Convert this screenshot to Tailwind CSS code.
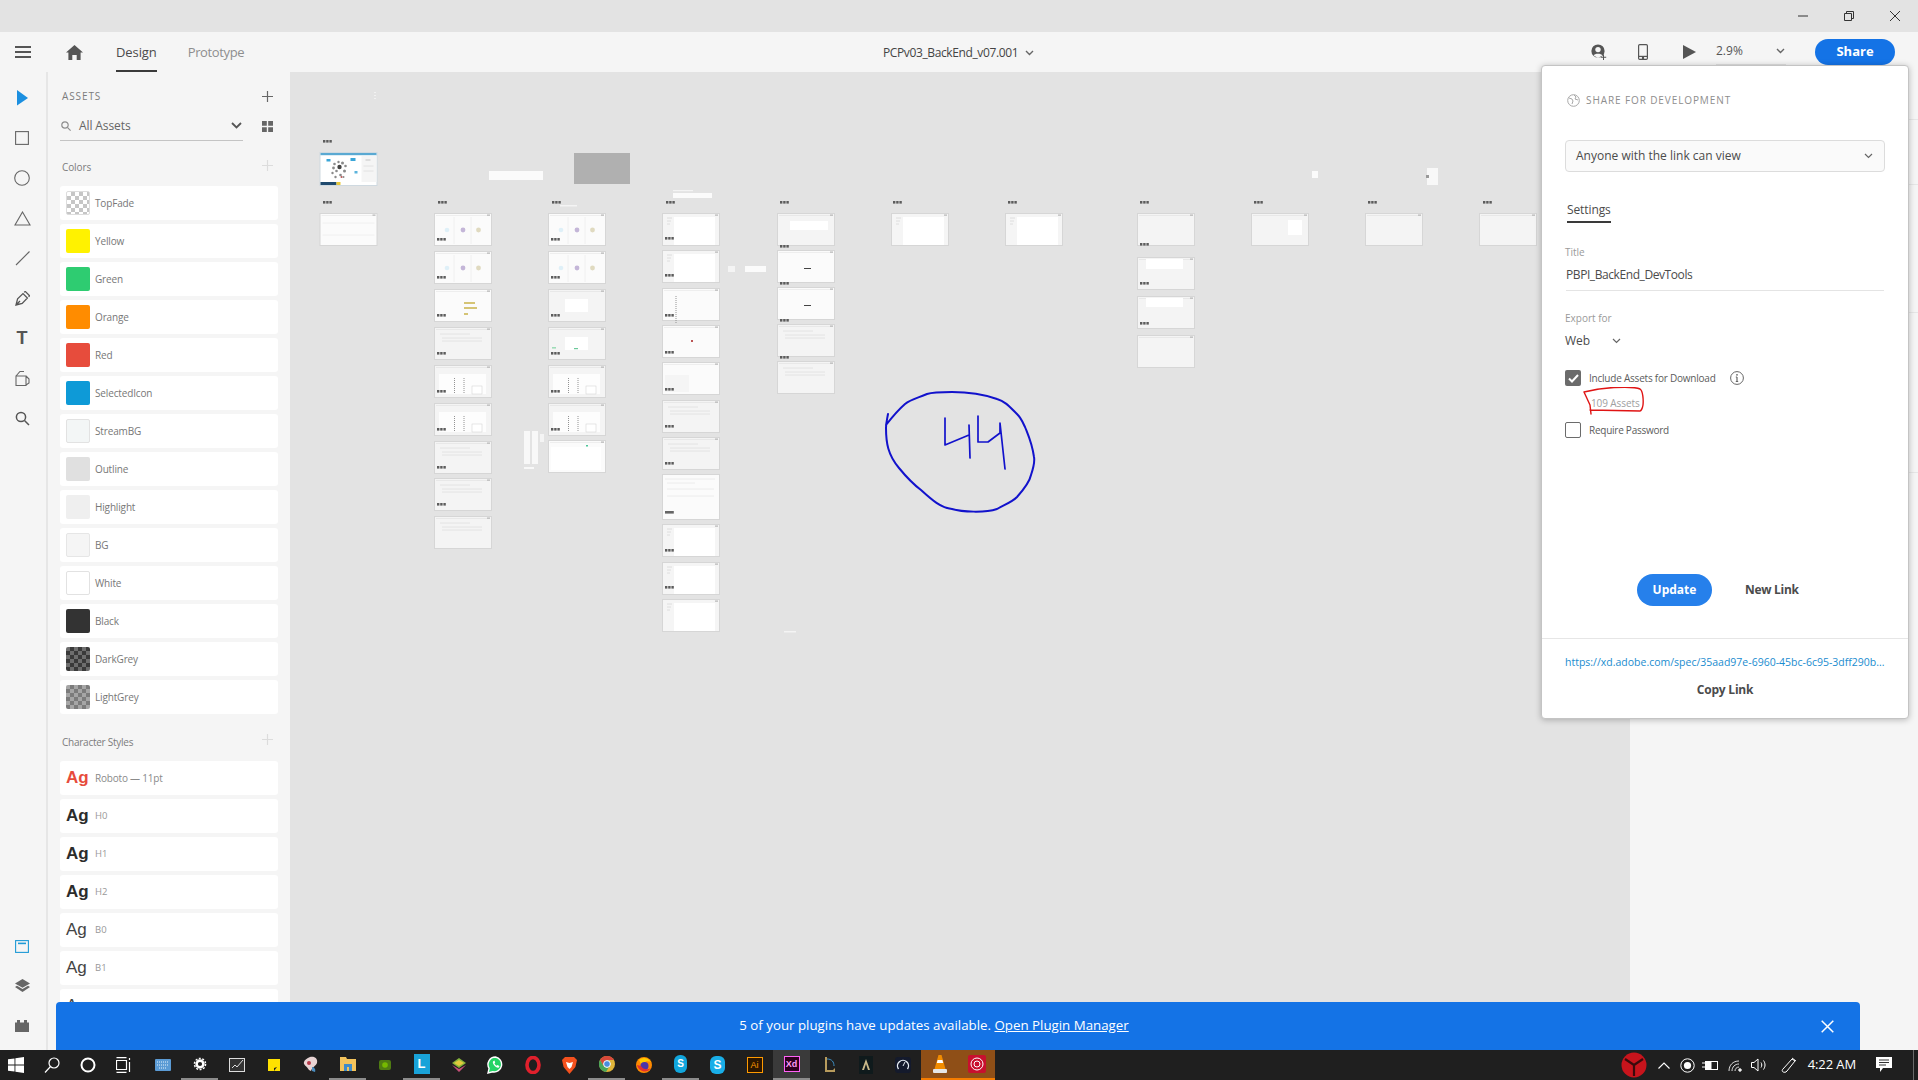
<!DOCTYPE html>
<html lang="en">
<head>
<meta charset="UTF-8" />
<title>PCPv03_BackEnd_v07.001 - Adobe XD</title>
<script src="https://cdn.jsdelivr.net/npm/@tailwindcss/browser@4"></script>
</head>
<body class="bg-[#e3e3e3]">
<div class="relative w-[1918px] h-[1080px] overflow-hidden flex flex-col font-['Open_Sans',sans-serif] text-[#4b4b4b]">

  <!-- title bar -->
  <div class="h-8 shrink-0 bg-[#e3e3e3] flex justify-end items-center text-[#333]">
    <div class="w-[46px] h-8 flex items-center justify-center"><svg width="12" height="12" viewBox="0 0 12 12"><path d="M1 6h10" stroke="#333" /></svg></div>
    <div class="w-[46px] h-8 flex items-center justify-center"><svg width="12" height="12" viewBox="0 0 12 12" fill="none" stroke="#333"><path d="M1.5 3.5h7v7h-7zM3.5 3.5v-2h7v7h-2" /></svg></div>
    <div class="w-[46px] h-8 flex items-center justify-center mr-0"><svg width="12" height="12" viewBox="0 0 12 12" fill="none" stroke="#333"><path d="M1 1l10 10M11 1L1 11" /></svg></div>
  </div>

  <!-- toolbar -->
  <div class="h-10 shrink-0 bg-[#f5f5f5] flex items-center relative">
    <svg class="ml-[15px]" width="16" height="12" viewBox="0 0 16 12" fill="#555"><path d="M0 0h16v2H0zM0 5h16v2H0zM0 10h16v2H0z" /></svg>
    <svg class="ml-[35px]" width="17" height="15" viewBox="0 0 17 15" fill="#555"><path d="M8.5 0L17 7.5h-2.4V15h-3.9v-5H6.3v5H2.4V7.5H0z" /></svg>
    <div class="ml-[33px] h-10 flex items-center border-b-2 border-[#3a3a3a] text-[13px] tracking-[-0.1px] text-[#4b4b4b] pt-[3px]">Design</div>
    <div class="ml-[31px] text-[13px] tracking-[-0.35px] pt-[1px] text-[#8e8e8e]">Prototype</div>
    <div class="absolute left-[883px] top-0 h-10 pt-[1px] flex items-center text-[12px] tracking-[-0.38px] text-[#444] gap-[7px]">
      PCPv03_BackEnd_v07.001
      <svg width="9" height="6" viewBox="0 0 9 6" fill="none" stroke="#666" stroke-width="1.4"><path d="M1 1l3.5 3.5L8 1" /></svg>
    </div>
    <div class="ml-auto flex items-center">
      <svg class="mr-[31px]" width="16" height="16" viewBox="0 0 16 16" fill="#555"><circle cx="7" cy="7" r="6.6" /><circle cx="7" cy="5.6" r="2.7" fill="#f5f5f5" /><path d="M2.6 11.4c.8-2.2 7.9-2.2 8.8 0L7 14z" fill="#f5f5f5" /><path d="M12 10.5h1v2.2h2.2v1H13V16h-1v-2.3H9.8v-1H12z" /></svg>
      <svg class="mr-[35px]" width="10" height="16" viewBox="0 0 10 16" fill="none" stroke="#555" stroke-width="1.2"><rect x=".6" y=".6" width="8.8" height="14.8" rx="1.2" /><path d="M.6 12.4h8.8" /><circle cx="5" cy="14" r=".6" fill="#555" /></svg>
      <svg class="mr-[20px]" width="13" height="14" viewBox="0 0 13 14" fill="#555"><path d="M0 0l13 7-13 7z" /></svg>
      <div class="w-[70px] h-[26px] mr-[29px] border-b border-[#e0e0e0] flex items-center justify-between pr-[1px] pb-[2px] text-[12px] text-[#555]">
        2.9%
        <svg width="9" height="6" viewBox="0 0 9 6" fill="none" stroke="#666" stroke-width="1.4"><path d="M1 1l3.5 3.5L8 1" /></svg>
      </div>
      <div class="w-[80px] h-[26px] rounded-full bg-[#1473e6] text-white text-[13px] font-bold flex items-center justify-center mr-[23px]">Share</div>
    </div>
  </div>

  <!-- main -->
  <div class="flex-1 flex min-h-0">
    <!-- tool rail -->
    <div class="w-[46px] shrink-0 bg-[#f5f5f5] flex flex-col items-center pt-[6px] pb-[4px] pr-[2px]">
      <div class="flex flex-col items-center">
        <div class="h-10 flex items-center"><svg width="14" height="18" viewBox="0 0 14 18" fill="#1b8fe0"><path d="M2 1l11 8-11 7.5z" /></svg></div>
        <div class="h-10 flex items-center"><svg width="14" height="14" viewBox="0 0 14 14" fill="none" stroke="#666" stroke-width="1.1"><rect x=".6" y=".6" width="12.8" height="12.8" /></svg></div>
        <div class="h-10 flex items-center"><svg width="16" height="16" viewBox="0 0 16 16" fill="none" stroke="#666" stroke-width="1.1"><circle cx="8" cy="8" r="7.3" /></svg></div>
        <div class="h-10 flex items-center"><svg width="17" height="15" viewBox="0 0 17 15" fill="none" stroke="#666" stroke-width="1.1"><path d="M8.5 1L16 14H1z" /></svg></div>
        <div class="h-10 flex items-center"><svg width="15" height="15" viewBox="0 0 15 15" fill="none" stroke="#666" stroke-width="1.1"><path d="M1 14L14.5 .5" /></svg></div>
        <div class="h-10 flex items-center"><svg width="15" height="15" viewBox="0 0 15 15" fill="none" stroke="#555" stroke-width="1.3"><path d="M1 14l1.6-6.2L8 2.6l4.4 4.4-5.2 5.4zM9.2 1.4l1-1 4.4 4.4-1 1M1 14l4-4" /></svg></div>
        <div class="h-10 flex items-center font-['Liberation_Sans',sans-serif] font-bold text-[18px] text-[#555]">T</div>
        <div class="h-10 flex items-center"><svg width="15" height="15" viewBox="0 0 15 15" fill="none" stroke="#666" stroke-width="1.1"><path d="M1 5h10v9.500H1zM1 5l4-4.500h4M11 5l3 3v4l-3 2" /></svg></div>
        <div class="h-10 flex items-center"><svg width="15" height="15" viewBox="0 0 15 15" fill="none" stroke="#555" stroke-width="1.5"><circle cx="6" cy="6" r="4.6" /><path d="M9.5 9.5L14 14" /></svg></div>
      </div>
      <div class="mt-auto flex flex-col items-center">
        <div class="h-10 flex items-center"><svg width="14" height="13" viewBox="0 0 14 13" fill="none" stroke="#1f9ad6" stroke-width="1.1"><rect x=".6" y=".6" width="12.8" height="11.8" /><path d="M3 3.4h8" stroke-width="1.6" /></svg></div>
        <div class="h-10 flex items-center"><svg width="15" height="14" viewBox="0 0 15 14" fill="#666"><path d="M7.5 0L15 4.4 7.5 8.8 0 4.4z" /><path d="M2 6.8l5.5 3.2L13 6.8l2 1.3-7.5 5-7.5-5z" /></svg></div>
        <div class="h-10 flex items-center"><svg width="14" height="12" viewBox="0 0 14 12" fill="#666"><path d="M0 2.5h2V0h3v2.5h4V0h3v2.5h2V12H0z" /></svg></div>
      </div>
    </div>
    <div class="w-[2px] shrink-0 bg-[#e6e6e6]"></div>

    <!-- assets panel -->
    <div class="w-[242px] shrink-0 bg-[#f5f5f5] pl-[12px] pr-[12px] overflow-hidden">
      <div class="h-[16px] mt-[16px] flex items-center justify-between pl-[2px] pr-[5px]">
        <span class="text-[10px] tracking-[0.9px] text-[#7c7c7c]">ASSETS</span>
        <svg width="11" height="11" viewBox="0 0 11 11" stroke="#666" stroke-width="1.2"><path d="M5.5 0v11M0 5.5h11" /></svg>
      </div>
      <div class="flex items-center mt-[9px]">
        <div class="w-[183px] h-[28px] border-b border-[#c4c4c4] flex items-center pl-[1px] pr-[1px] pb-[2px]">
          <svg width="10" height="10" viewBox="0 0 10 10" fill="none" stroke="#8e8e8e" stroke-width="1.2"><circle cx="4" cy="4" r="3.2" /><path d="M6.4 6.4L9.6 9.6" /></svg>
          <span class="ml-[8px] text-[12px] tracking-[-0.1px] text-[#666]">All Assets</span>
          <svg class="ml-auto" width="11" height="7" viewBox="0 0 11 7" fill="none" stroke="#555" stroke-width="1.8"><path d="M1 1l4.5 4.5L10 1" /></svg>
        </div>
        <svg class="ml-[19px] mb-[2px]" width="11" height="11" viewBox="0 0 11 11" fill="#666"><path d="M0 0h4.8v4.8H0zM6.2 0H11v4.8H6.2zM0 6.2h4.8V11H0zM6.2 6.2H11V11H6.2z" /></svg>
      </div>
      <div class="h-[16px] mt-[18px] flex items-center justify-between pl-[2px] pr-[5px]">
        <span class="text-[10px] tracking-[-0.1px] text-[#7c7c7c] mt-[1px]">Colors</span>
        <svg class="mb-[4px]" width="11" height="11" viewBox="0 0 11 11" stroke="#dcdcdc" stroke-width="1.2"><path d="M5.5 0v11M0 5.5h11" /></svg>
      </div>
      <div class="flex flex-col gap-1 mt-[11px]">
        <div class="h-[34px] rounded-[3px] bg-white flex items-center pl-[6px]"><div class="w-6 h-6 rounded-[2px] border border-[#ddd] bg-[image:repeating-conic-gradient(#c6c6c6_0_25%,#fff_0_50%)] bg-[length:8px_8px]"></div><span class="ml-[5px] text-[10px] tracking-[-0.15px] text-[#777]">TopFade</span></div>
        <div class="h-[34px] rounded-[3px] bg-white flex items-center pl-[6px]"><div class="w-6 h-6 rounded-[2px] bg-[#fff200]"></div><span class="ml-[5px] text-[10px] tracking-[-0.15px] text-[#777]">Yellow</span></div>
        <div class="h-[34px] rounded-[3px] bg-white flex items-center pl-[6px]"><div class="w-6 h-6 rounded-[2px] bg-[#2ecc71]"></div><span class="ml-[5px] text-[10px] tracking-[-0.15px] text-[#777]">Green</span></div>
        <div class="h-[34px] rounded-[3px] bg-white flex items-center pl-[6px]"><div class="w-6 h-6 rounded-[2px] bg-[#ff8c00]"></div><span class="ml-[5px] text-[10px] tracking-[-0.15px] text-[#777]">Orange</span></div>
        <div class="h-[34px] rounded-[3px] bg-white flex items-center pl-[6px]"><div class="w-6 h-6 rounded-[2px] bg-[#e74c3c]"></div><span class="ml-[5px] text-[10px] tracking-[-0.15px] text-[#777]">Red</span></div>
        <div class="h-[34px] rounded-[3px] bg-white flex items-center pl-[6px]"><div class="w-6 h-6 rounded-[2px] bg-[#0e9ad7]"></div><span class="ml-[5px] text-[10px] tracking-[-0.15px] text-[#777]">SelectedIcon</span></div>
        <div class="h-[34px] rounded-[3px] bg-white flex items-center pl-[6px]"><div class="w-6 h-6 rounded-[2px] border border-[#e2e2e2] bg-[#f3f6f6]"></div><span class="ml-[5px] text-[10px] tracking-[-0.15px] text-[#777]">StreamBG</span></div>
        <div class="h-[34px] rounded-[3px] bg-white flex items-center pl-[6px]"><div class="w-6 h-6 rounded-[2px] bg-[#e0e0e0]"></div><span class="ml-[5px] text-[10px] tracking-[-0.15px] text-[#777]">Outline</span></div>
        <div class="h-[34px] rounded-[3px] bg-white flex items-center pl-[6px]"><div class="w-6 h-6 rounded-[2px] bg-[#efefef]"></div><span class="ml-[5px] text-[10px] tracking-[-0.15px] text-[#777]">Highlight</span></div>
        <div class="h-[34px] rounded-[3px] bg-white flex items-center pl-[6px]"><div class="w-6 h-6 rounded-[2px] border border-[#e6e6e6] bg-[#f5f5f5]"></div><span class="ml-[5px] text-[10px] tracking-[-0.15px] text-[#777]">BG</span></div>
        <div class="h-[34px] rounded-[3px] bg-white flex items-center pl-[6px]"><div class="w-6 h-6 rounded-[2px] border border-[#e2e2e2] bg-white"></div><span class="ml-[5px] text-[10px] tracking-[-0.15px] text-[#777]">White</span></div>
        <div class="h-[34px] rounded-[3px] bg-white flex items-center pl-[6px]"><div class="w-6 h-6 rounded-[2px] bg-[#333]"></div><span class="ml-[5px] text-[10px] tracking-[-0.15px] text-[#777]">Black</span></div>
        <div class="h-[34px] rounded-[3px] bg-white flex items-center pl-[6px]"><div class="w-6 h-6 rounded-[2px] bg-[image:repeating-conic-gradient(#3a3a3a_0_25%,#6e6e6e_0_50%)] bg-[length:8px_8px]"></div><span class="ml-[5px] text-[10px] tracking-[-0.15px] text-[#777]">DarkGrey</span></div>
        <div class="h-[34px] rounded-[3px] bg-white flex items-center pl-[6px]"><div class="w-6 h-6 rounded-[2px] bg-[image:repeating-conic-gradient(#7c7c7c_0_25%,#a6a6a6_0_50%)] bg-[length:8px_8px]"></div><span class="ml-[5px] text-[10px] tracking-[-0.15px] text-[#777]">LightGrey</span></div>
      </div>
      <div class="h-[16px] mt-[19px] flex items-center justify-between pl-[2px] pr-[5px]">
        <span class="text-[10px] tracking-[-0.25px] text-[#7c7c7c] mt-[2px]">Character Styles</span>
        <svg class="mb-[4px]" width="11" height="11" viewBox="0 0 11 11" stroke="#dcdcdc" stroke-width="1.2"><path d="M5.5 0v11M0 5.5h11" /></svg>
      </div>
      <div class="flex flex-col gap-1 mt-[12px] font-['Liberation_Sans',sans-serif]">
        <div class="h-[34px] rounded-[3px] bg-white flex items-center pl-[6px]"><span class="w-[22px] text-[17px] font-bold text-[#e74c3c]">Ag</span><span class="ml-[7px] text-[10px] tracking-[-0.2px] text-[#8a8a8a] font-['Open_Sans',sans-serif]">Roboto — 11pt</span></div>
        <div class="h-[34px] rounded-[3px] bg-white flex items-center pl-[6px]"><span class="w-[22px] text-[17px] font-bold text-[#2c2c2c]">Ag</span><span class="ml-[7px] text-[9.5px] text-[#999] font-['Open_Sans',sans-serif]">H0</span></div>
        <div class="h-[34px] rounded-[3px] bg-white flex items-center pl-[6px]"><span class="w-[22px] text-[17px] font-bold text-[#2c2c2c]">Ag</span><span class="ml-[7px] text-[9.5px] text-[#999] font-['Open_Sans',sans-serif]">H1</span></div>
        <div class="h-[34px] rounded-[3px] bg-white flex items-center pl-[6px]"><span class="w-[22px] text-[17px] font-bold text-[#2c2c2c]">Ag</span><span class="ml-[7px] text-[9.5px] text-[#999] font-['Open_Sans',sans-serif]">H2</span></div>
        <div class="h-[34px] rounded-[3px] bg-white flex items-center pl-[6px]"><span class="w-[22px] text-[17px] text-[#444]">Ag</span><span class="ml-[7px] text-[9.5px] text-[#999] font-['Open_Sans',sans-serif]">B0</span></div>
        <div class="h-[34px] rounded-[3px] bg-white flex items-center pl-[6px]"><span class="w-[22px] text-[17px] text-[#444]">Ag</span><span class="ml-[7px] text-[9.5px] text-[#999] font-['Open_Sans',sans-serif]">B1</span></div>
        <div class="h-[34px] rounded-[3px] bg-white flex items-center pl-[6px]"><span class="w-[22px] text-[17px] text-[#444]">Ag</span></div>
      </div>
    </div>

    <!-- canvas -->
    <div class="w-[1340px] shrink-0 bg-[#e3e3e3] relative">
      <svg class="absolute left-0 top-0 blur-[0.4px]" width="1340" height="978" viewBox="290 72 1340 978">
        <defs>
          <g id="dots" fill="#5c5c5c"><rect width="2.4" height="2.6" /><rect x="3.2" width="2.4" height="2.6" /><rect x="6.4" width="2.4" height="2.6" /></g>
          <g id="frame"><rect x=".5" y=".5" width="57" height="32" fill="#fbfbfb" stroke="#d6d6d6" /><path d="M2 2.5h54" stroke="#eeeeee" /><rect x="53" y="1.5" width="3" height="1.2" fill="#b5b5b5" /></g>
          <g id="flat"><rect x=".5" y=".5" width="57" height="32" fill="#f4f4f4" stroke="#d6d6d6" /><path d="M2 2.5h54" stroke="#e8e8e8" /><rect x="53" y="1.5" width="3" height="1.2" fill="#b5b5b5" /></g>
          <g id="side"><rect x=".5" y=".5" width="57" height="32" fill="#f5f5f5" stroke="#d6d6d6" /><rect x="12" y="4" width="41" height="28" fill="#fff" /><rect x="53" y="1.5" width="3" height="1.2" fill="#b5b5b5" /><path d="M5 5h5M5 8h4M5 11h3" stroke="#d8d8d8" stroke-width=".8" /></g>
          <g id="blobs"><use href="#frame" /><path d="M20 4v27M37 4v27" stroke="#f0f0f0" /><circle cx="13" cy="17" r="2.3" fill="#dff0f8" /><circle cx="29" cy="17" r="2.4" fill="#c4b6d8" /><circle cx="44.500" cy="17" r="2.400" fill="#e0dac0" /></g>
          <g id="table"><use href="#flat" /><rect x="5" y="9" width="47" height="20" fill="#fdfdfd" /><path d="M20.5 13v15M30 13v15" stroke="#777" stroke-width=".8" stroke-dasharray="1 1" /><rect x="38" y="21" width="10" height="8" fill="#fff" stroke="#d6d6d6" stroke-width=".6" /></g>
          <g id="form"><use href="#flat" /><path d="M6 7h30M8 11h40M8 14h40" stroke="#e0e0e0" stroke-width=".8" /></g>
        </defs>

        <!-- hero board -->
        <use href="#dots" x="323" y="140" />
        <g transform="translate(319.5 152)">
          <rect x=".5" y=".5" width="57" height="33" fill="#fff" stroke="#cfd9e0" />
          <rect x="1" y="1" width="56" height="2.2" fill="#5aa9d2" />
          <rect x="1" y="30" width="16" height="3" fill="#1f4a6e" />
          <rect x="17" y="30" width="4" height="3" fill="#e8c93a" />
          <rect x="42" y="4" width="15" height="26" fill="#f5f5f5" />
          <rect x="7" y="7" width="4" height="2.500" fill="#3aa6d8" /><rect x="31" y="6" width="5" height="3" fill="#3aa6d8" /><rect x="35" y="19" width="3" height="2.500" fill="#5bb3dc" />
          <g fill="#8a8a8a"><circle cx="15" cy="12" r="1.300" /><circle cx="19" cy="10" r="1.200" /><circle cx="23" cy="11" r="1.500" /><circle cx="26" cy="14" r="1.300" /><circle cx="14" cy="16" r="1.400" /><circle cx="17" cy="19" r="1.300" /><circle cx="25" cy="19" r="1.500" /><circle cx="13" cy="21" r="1.200" /><circle cx="21" cy="23" r="1.300" /><circle cx="24" cy="25" r="1" /><circle cx="16" cy="25" r="1.200" /></g>
          <circle cx="20" cy="15" r="2.200" fill="#444" /><circle cx="22" cy="25" r="1" fill="#b55" />
          <path d="M44 14h10M44 19h10" stroke="#e2e2e2" />
          <rect x="46" y="7" width="5" height="2" fill="#ddd" />
        </g>
        <rect x="489" y="171" width="54" height="9" fill="#fbfbfb" />
        <rect x="574" y="153" width="56" height="31" fill="#b0b0b0" />
        <rect x="673" y="193" width="39" height="5" fill="#fbfbfb" />
        <rect x="673" y="190" width="20" height="1.2" fill="#f4f4f4" />
        <rect x="560" y="205" width="17" height="1.5" fill="#f4f4f4" />
        <rect x="728" y="266" width="7" height="6" fill="#f4f4f4" /><rect x="745" y="266" width="21" height="6" fill="#fbfbfb" />
        <path d="M375 92v1M375 95v1M375 98v1" stroke="#f7f7f7" stroke-width="1.5" />
        <rect x="1312" y="171" width="6" height="7" fill="#fbfbfb" />
        <rect x="1427" y="168" width="11" height="17" fill="#f8f8f8" /><rect x="1426" y="175" width="3" height="3" fill="#999" />
        <rect x="524" y="431" width="6" height="33" fill="#f8f8f8" /><rect x="532" y="431" width="6" height="33" fill="#f8f8f8" /><rect x="540" y="434" width="4" height="8" fill="#f4f4f4" /><rect x="524" y="467" width="10" height="2" fill="#f8f8f8" />
        <rect x="784" y="631" width="12" height="1.5" fill="#f4f4f4" />

        <!-- column 1 -->
        <use href="#dots" x="323" y="201" />
        <g transform="translate(319.5 213)"><use href="#frame" /><path d="M3 10h52M3 22h52" stroke="#f0f0f0" /></g>

        <!-- column 2 -->
        <use href="#dots" x="438" y="201" />
        <use href="#blobs" x="434" y="213" /><use href="#dots" x="437" y="238" />
        <use href="#blobs" x="434" y="251" /><use href="#dots" x="437" y="276" />
        <use href="#frame" x="434" y="289" /><path d="M464 303h11M464 308h13M464 314h4" stroke="#c9b24a" stroke-width="1.3" /><use href="#dots" x="437" y="314" />
        <use href="#form" x="434" y="327" /><use href="#dots" x="437" y="352" />
        <use href="#table" x="434" y="365" /><use href="#dots" x="437" y="390" />
        <use href="#table" x="434" y="403" /><use href="#dots" x="437" y="428" />
        <use href="#form" x="434" y="441" /><use href="#dots" x="437" y="466" />
        <use href="#form" x="434" y="478" /><use href="#dots" x="437" y="503" />
        <use href="#form" x="434" y="516" />

        <!-- column 3 -->
        <use href="#dots" x="552" y="201" />
        <use href="#blobs" x="548" y="213" /><use href="#dots" x="551" y="238" />
        <use href="#blobs" x="548" y="251" /><use href="#dots" x="551" y="276" />
        <use href="#flat" x="548" y="289" /><rect x="565" y="299" width="23" height="13" fill="#fff" /><use href="#dots" x="551" y="314" />
        <use href="#flat" x="548" y="327" /><rect x="565" y="337" width="23" height="13" fill="#fff" /><rect x="552" y="347" width="4" height="1.6" fill="#9fdcb8" /><rect x="574" y="348" width="4" height="1.2" fill="#6cc99a" /><use href="#dots" x="551" y="352" />
        <use href="#table" x="548" y="365" /><use href="#dots" x="551" y="390" />
        <use href="#table" x="548" y="403" /><use href="#dots" x="551" y="428" />
        <g transform="translate(548 440)"><use href="#frame" /><rect x="3" y="7" width="50" height="23" fill="#fff" /><rect x="38" y="5" width="2" height="1.5" fill="#4cc79a" /></g>

        <!-- column 4 -->
        <use href="#dots" x="666" y="201" />
        <use href="#side" x="662" y="213" /><use href="#dots" x="665" y="237" />
        <use href="#side" x="662" y="250" /><use href="#dots" x="665" y="274" />
        <use href="#frame" x="662" y="288" /><path d="M676 296v28" stroke="#888" stroke-width=".9" stroke-dasharray="1 1" /><use href="#dots" x="665" y="314" />
        <use href="#frame" x="662" y="325" /><rect x="691" y="340" width="2" height="2" fill="#b55" /><use href="#dots" x="665" y="351" />
        <use href="#frame" x="662" y="362" /><rect x="665" y="375" width="24" height="17" fill="#f5f5f5" /><use href="#dots" x="665" y="388" />
        <use href="#form" x="662" y="400" /><use href="#dots" x="665" y="425" />
        <use href="#form" x="662" y="437" /><use href="#dots" x="665" y="462" />
        <g transform="translate(662 474)"><rect x=".5" y=".5" width="57" height="45" fill="#fbfbfb" stroke="#d6d6d6" /><path d="M3 5h50M5 9h28M5 15h47M5 22h47" stroke="#eaeaea" stroke-width=".8" /><rect x="3" y="37" width="8.8" height="2.6" fill="#666" /></g>
        <use href="#side" x="662" y="524" /><use href="#dots" x="665" y="549" />
        <use href="#side" x="662" y="562" /><use href="#dots" x="665" y="586" />
        <use href="#side" x="662" y="599" />

        <!-- column 5 -->
        <use href="#dots" x="780" y="201" />
        <g transform="translate(777 213)"><use href="#flat" /><rect x="13" y="8" width="38" height="9" fill="#fff" /></g><use href="#dots" x="780" y="245" />
        <g transform="translate(777 250)"><use href="#frame" /><rect x="27" y="18" width="7" height="1" fill="#444" /></g><use href="#dots" x="780" y="282" />
        <g transform="translate(777 287)"><use href="#frame" /><rect x="27" y="18" width="7" height="1" fill="#444" /></g><use href="#dots" x="780" y="319" />
        <use href="#form" x="777" y="324" /><use href="#dots" x="780" y="356" />
        <use href="#form" x="777" y="361" />

        <!-- right hand columns -->
        <use href="#dots" x="893" y="201" /><use href="#side" x="891" y="213" />
        <use href="#dots" x="1008" y="201" /><use href="#side" x="1005" y="213" />
        <use href="#dots" x="1140" y="201" />
        <use href="#flat" x="1137" y="213" /><use href="#dots" x="1140" y="243" />
        <g transform="translate(1137 257)"><use href="#flat" /><rect x="9" y="2" width="37" height="10" fill="#fff" /></g><use href="#dots" x="1140" y="282" />
        <g transform="translate(1137 296)"><use href="#flat" /><rect x="9" y="2" width="37" height="9" fill="#fff" /></g><use href="#dots" x="1140" y="322" />
        <use href="#flat" x="1137" y="335" />
        <use href="#dots" x="1254" y="201" /><g transform="translate(1251 213)"><use href="#flat" /><rect x="37" y="7" width="14" height="15" fill="#fff" /></g>
        <use href="#dots" x="1368" y="201" /><use href="#flat" x="1365" y="213" />
        <use href="#dots" x="1483" y="201" /><use href="#flat" x="1479" y="213" />
      </svg>
      <!-- hand drawn note -->
      <svg class="absolute left-0 top-0" width="1340" height="978" viewBox="290 72 1340 978" fill="none" stroke="#1212cc" stroke-linecap="round" stroke-linejoin="round">
        <path stroke-width="2" d="M888 414C887 420 886 423 886 428C886 443 888 455 899 468C908 479 913 484 921 490C932 500 941 508 952 509C962 512 985 513 997 509C1006 504 1012 502 1017 497C1025 488 1030 480 1031 475C1034 466 1035 462 1034 457C1032 443 1029 437 1025 427C1021 418 1019 416 1015 412C1008 405 1004 401 997 399C980 393 965 392 952 392C942 392 933 392 927 394C918 398 911 399 905 404C897 411 893 416 886 425" />
        <path stroke-width="1.700" d="M945 418V445L969 435M969 425L970 458M978 416V442H988L1000 433V423L1005 469" />
      </svg>
    </div>

    <!-- right panel behind the popover -->
    <div class="flex-1 bg-[#f5f5f5] flex flex-col">
      <div class="h-[48px] border-b border-[#e6e6e6]"></div>
      <div class="h-[65px] border-b border-[#e6e6e6]"></div>
      <div class="h-[128px] border-b border-[#e6e6e6]"></div>
      <div class="h-[160px] border-b border-[#e6e6e6]"></div>
    </div>
  </div>

  <!-- taskbar -->
  <div class="h-[30px] shrink-0 bg-[#1f1f1f] flex items-center relative">
    <div class="flex items-center w-[146px] ml-[-2px]">
      <div class="w-9 h-[30px] flex items-center justify-center"><svg width="16" height="16" viewBox="0 0 16 16" fill="#fff"><path d="M0 2.3l6.5-.9v6.2H0zM7.4 1.3L16 0v7.6H7.4zM0 8.4h6.5v6.2L0 13.7zM7.4 8.4H16V16l-8.6-1.2z" /></svg></div>
      <div class="w-9 h-[30px] flex items-center justify-center"><svg width="16" height="16" viewBox="0 0 16 16" fill="none" stroke="#fff" stroke-width="1.2"><circle cx="10" cy="6" r="5" /><path d="M6.5 9.5L1 15.5" /></svg></div>
      <div class="w-9 h-[30px] flex items-center justify-center"><svg width="16" height="16" viewBox="0 0 16 16" fill="none" stroke="#fff" stroke-width="2"><circle cx="8" cy="8" r="6.5" /></svg></div>
      <div class="w-9 h-[30px] flex items-center justify-center"><svg width="16" height="16" viewBox="0 0 16 16" fill="none" stroke="#fff" stroke-width="1.2"><path d="M.5 3.5h10v9H.5zM.5 .6h10M.5 15.4h10M13.5 1v2M13.5 5v10" /></svg></div>
    </div>
    <div class="w-[37px] h-[30px] flex items-center justify-center"><svg width="16" height="12" viewBox="0 0 16 12"><rect width="16" height="12" rx="1" fill="#5b9bd5" /><path d="M2 3h12M2 6h12M4 9h8" stroke="#e8f2fb" stroke-dasharray="1 1" /></svg></div>
    <div class="w-[37px] h-[30px] flex items-center justify-center border-b-2 border-[#8c8c8c]"><svg width="14" height="14" viewBox="0 0 14 14" fill="none" stroke="#fff"><circle cx="7" cy="7" r="3.4" stroke-width="2.6" /><circle cx="7" cy="7" r="5.6" stroke-width="1.4" stroke-dasharray="2 1.5" /></svg></div>
    <div class="w-[37px] h-[30px] flex items-center justify-center"><svg width="16" height="14" viewBox="0 0 16 14" fill="none" stroke="#ddd"><rect x=".5" y=".5" width="15" height="13" fill="#333" /><path d="M3 10l3-3 2 2 6-7" /></svg></div>
    <div class="w-[37px] h-[30px] flex items-center justify-center"><svg width="12" height="12" viewBox="0 0 12 12"><rect width="12" height="12" fill="#ffe100" /><path d="M6 12V9l3-1z" fill="#222" /></svg></div>
    <div class="w-[37px] h-[30px] flex items-center justify-center"><svg width="16" height="18" viewBox="0 0 16 18"><path d="M7 1c5-1 8 2 7 6-1 3-5 4-6 8l-2-1C4 10 0 9 1 6c.5-2 3-4 6-5z" fill="#e8d3d3" /><circle cx="6" cy="7" r="2" fill="#b8394a" /><path d="M9 11c2 0 4 2 3 5l-3-1z" fill="#4a8dc0" /></svg></div>
    <div class="w-[37px] h-[30px] flex items-center justify-center border-b-2 border-[#8c8c8c]"><svg width="16" height="16" viewBox="0 0 16 16"><path d="M0 1h6l1 2h9v12H0z" fill="#f3c35c" /><rect x="4" y="8" width="8" height="7" fill="#3f8bc9" /><rect x="7" y="11" width="2" height="4" fill="#f3c35c" /></svg></div>
    <div class="w-[37px] h-[30px] flex items-center justify-center"><svg width="12" height="10" viewBox="0 0 12 10"><rect width="12" height="10" rx="2" fill="#4f7c12" /><circle cx="6" cy="5" r="2.8" fill="#76b900" /></svg></div>
    <div class="w-[37px] h-[30px] flex items-center justify-center border-b-2 border-[#8c8c8c]"><div class="w-4 h-5 bg-[#19a3d9] text-white text-[13px] font-bold leading-5 text-center font-['Liberation_Sans',sans-serif]">L</div></div>
    <div class="w-[37px] h-[30px] flex items-center justify-center"><svg width="16" height="16" viewBox="0 0 16 16"><path d="M8 1l7 5-7 5-7-5z" fill="#86b33a" /><path d="M1 8l7 4 7-4-7 7z" fill="#c44f78" /><path d="M3 6l5-3 5 3-5 3z" fill="#e3c93d" /></svg></div>
    <div class="w-[37px] h-[30px] flex items-center justify-center"><svg width="17" height="18" viewBox="0 0 17 18"><path d="M8.5 1a7.5 7.5 0 0 0-6.4 11.4L1 17l4.7-1.2A7.5 7.5 0 1 0 8.5 1z" fill="#25d366" stroke="#fff" stroke-width="1.4" /><path d="M6 5.5c-1 2 3 7 6 6l.4-1.6-2-1-.8.8c-1-.5-1.8-1.4-2.2-2.3l.8-.8-.8-2z" fill="#fff" /></svg></div>
    <div class="w-[37px] h-[30px] flex items-center justify-center"><svg width="16" height="18" viewBox="0 0 16 18" fill="none"><ellipse cx="8" cy="9" rx="6" ry="7.6" stroke="#e0202c" stroke-width="3.6" /></svg></div>
    <div class="w-[37px] h-[30px] flex items-center justify-center"><svg width="15" height="18" viewBox="0 0 15 18"><path d="M3 1h9l3 3-1.6 7L7.5 18 1.6 11 0 4z" fill="#f4511e" /><path d="M4 6l3.5 1L11 6l-1.5 5-2 2-2-2z" fill="#fff" /></svg></div>
    <div class="w-[37px] h-[30px] flex items-center justify-center border-b-2 border-[#8c8c8c]"><svg width="16" height="16" viewBox="0 0 16 16"><circle cx="8" cy="8" r="8" fill="#e0b53a" /><path d="M8 0a8 8 0 0 0-7 4l3.5 6L8 4h7a8 8 0 0 0-7-4z" fill="#d8483a" /><path d="M1 4a8 8 0 0 0 6 12l3.5-6L8 12 4.5 10z" fill="#4aa65a" /><circle cx="8" cy="8" r="3.4" fill="#4a8de0" stroke="#fff" /></svg></div>
    <div class="w-[37px] h-[30px] flex items-center justify-center"><svg width="16" height="16" viewBox="0 0 16 16"><circle cx="8" cy="8" r="8" fill="#ff8a00" /><path d="M3 3c3-3 9-3 12 2-2-1-6-1-7 1l-3 1z" fill="#ffcb00" /><circle cx="8.5" cy="9" r="4" fill="#4c35a8" /><path d="M1 8c2 7 10 9 14 3-3 2-8 2-10-2z" fill="#e3312f" /></svg></div>
    <div class="w-[37px] h-[30px] flex items-center justify-center border-b-2 border-[#8c8c8c]"><div class="w-[13px] h-[18px] rounded-[6px] bg-[#11a6dd] text-white text-[10px] font-bold leading-[18px] text-center font-['Liberation_Sans',sans-serif]">S</div></div>
    <div class="w-[37px] h-[30px] flex items-center justify-center"><div class="w-[15px] h-[18px] rounded-[6px] bg-[#19aee8] text-white text-[12px] font-bold leading-[18px] text-center font-['Liberation_Sans',sans-serif]">S</div></div>
    <div class="w-[37px] h-[30px] flex items-center justify-center"><div class="w-4 h-4 border border-[#ff9a00] bg-[#2b1600] text-[#ff9a00] text-[9px] leading-[14px] text-center font-['Liberation_Sans',sans-serif]">Ai</div></div>
    <div class="w-[37px] h-[30px] flex items-center justify-center bg-[#3a3a3a] border-b-2 border-[#8c8c8c]"><div class="w-4 h-4 border border-[#ff61f6] bg-[#2e001e] text-[#ff9cf5] text-[9px] font-bold leading-[14px] text-center font-['Liberation_Sans',sans-serif]">Xd</div></div>
    <div class="w-[37px] h-[30px] flex items-center justify-center"><svg width="14" height="18" viewBox="0 0 14 18"><path d="M3 1h2v13h6l2-2v4H3z" fill="#b89b5c" /><path d="M5 3c5 0 7 3 7 7" stroke="#3d8fc4" fill="none" /></svg></div>
    <div class="w-[37px] h-[30px] flex items-center justify-center"><svg width="14" height="18" viewBox="0 0 14 18"><rect width="14" height="18" fill="#0f1a1c" /><path d="M7 3l4 11H9L7 8l-2 6H3z" fill="#c9b98a" /></svg></div>
    <div class="w-[37px] h-[30px] flex items-center justify-center"><svg width="16" height="16" viewBox="0 0 16 16" fill="none"><rect width="16" height="16" rx="3" fill="#141a2c" /><path d="M3.5 12a5.5 5.5 0 1 1 9 0" stroke="#e8eef5" stroke-width="1.4" /><path d="M8 9l2-4" stroke="#e8eef5" /></svg></div>
    <div class="w-[37px] h-[30px] flex items-center justify-center bg-[#8f4f17] border-b-2 border-[#f57c00]"><svg width="16" height="20" viewBox="0 0 16 20"><path d="M6.5 1h3l4 14h-11z" fill="#f28c00" /><path d="M5.6 6h4.8l.8 3H4.8z" fill="#fff" /><rect x="1" y="15" width="14" height="4" rx="1" fill="#e6e6e6" /></svg></div>
    <div class="w-[37px] h-[30px] flex items-center justify-center bg-[#8f4f17] border-b-2 border-[#f57c00]"><svg width="18" height="18" viewBox="0 0 18 18" fill="none"><rect width="18" height="18" rx="2" fill="#c8102e" /><circle cx="9" cy="9" r="6" stroke="#fff" /><circle cx="9" cy="9" r="3" stroke="#fff" /></svg></div>

    <!-- tray -->
    <div class="ml-auto flex items-center h-[30px] text-white">
      <svg class="mr-[11px]" width="26" height="26" viewBox="0 0 26 26" fill="none"><circle cx="13" cy="13" r="12.5" fill="#c8141c" /><path d="M13 13L4 7M13 13l9-6M13 13v11" stroke="#3a0a0c" stroke-width="2.2" /></svg>
      <svg class="mr-[10px]" width="12" height="7" viewBox="0 0 12 7" fill="none" stroke="#fff" stroke-width="1.1"><path d="M.5 6.500L6 1l5.500 5.500" /></svg>
      <svg class="mr-[7px]" width="15" height="15" viewBox="0 0 15 15" fill="none"><circle cx="7.500" cy="7.500" r="6.700" stroke="#fff" /><circle cx="7.500" cy="7.500" r="3.600" fill="#fff" /></svg>
      <svg class="mr-[10px]" width="16" height="12" viewBox="0 0 16 12" fill="none" stroke="#fff"><rect x="3.500" y="2.500" width="12" height="8" /><rect x="4" y="3" width="5" height="7" fill="#fff" /><path d="M0 4h3M0 8h3" /></svg>
      <svg class="mr-[9px]" width="14" height="13" viewBox="0 0 14 13" fill="none" stroke="#ddd"><path d="M1 12c0-6 4-10 10-10M4 12c0-4 3-7 7-7M7 12c0-2 1.500-4 4-4" /><circle cx="12" cy="11" r="1.300" fill="#fff" /></svg>
      <svg class="mr-[14px]" width="16" height="14" viewBox="0 0 16 14" fill="none" stroke="#fff"><path d="M.5 4.500H3L7 1v12L3 9.500H.5zM10 4.500c1 1.500 1 3.500 0 5M12.500 2.500c2 3 2 6 0 9" /></svg>
      <svg class="mr-[11px]" width="16" height="16" viewBox="0 0 16 16" fill="none" stroke="#fff"><path d="M5 15c-3 1-5-1-3-3l9-10 3 2-8 10zM11 1l4 3" /></svg>
      <span class="text-[13px] tracking-[-0.1px] mr-[20px]">4:22 AM</span>
      <svg class="mr-[21px]" width="16" height="16" viewBox="0 0 16 16"><path d="M0 0h16v11H7l-3 4v-4H0z" fill="#fff" /><path d="M3 3h10M3 5.500h10M3 8h7" stroke="#333" /></svg>
      <div class="w-[1px] h-[30px] bg-[#6a6a6a] mr-[4px]"></div>
    </div>
  </div>

  <!-- share popover -->
  <div class="absolute left-[1541px] top-[65px] w-[368px] h-[654px] bg-white rounded-[4px] border border-[#c4c4c4] shadow-[0_1px_6px_rgba(0,0,0,0.25)] flex flex-col pl-[23px] pr-[23px]">
    <div class="flex items-center mt-[27px] h-[14px] pl-[2px]">
      <svg width="13" height="13" viewBox="0 0 13 13" fill="none" stroke="#a8a8a8"><circle cx="6.500" cy="6.500" r="5.800" /><path d="M2 4l3 1 1 2-1 3M7 1l2 2-1 2 3 1" /></svg>
      <span class="ml-[6px] text-[10px] tracking-[0.9px] text-[#8e8e8e]">SHARE FOR DEVELOPMENT</span>
    </div>
    <div class="mt-[33px] h-[32px] w-[320px] rounded-[4px] border border-[#dcdcdc] bg-[#fafafa] flex items-center justify-between pl-[10px] pr-[11px] text-[12px] text-[#4b4b4b]">
      Anyone with the link can view
      <svg width="9" height="6" viewBox="0 0 9 6" fill="none" stroke="#666" stroke-width="1.2"><path d="M1 1l3.500 3.500L8 1" /></svg>
    </div>
    <div class="mt-[28px] w-fit ml-[2px] pb-[1px] border-b-2 border-[#3a3a3a] text-[12px] tracking-[-0.1px] leading-[20px] text-[#4b4b4b]">Settings</div>
    <div class="mt-[22px] text-[10px] leading-[14px] text-[#9a9a9a]">Title</div>
    <div class="mt-[7px] w-[318px] ml-[1px] pb-[7px] border-b border-[#e4e4e4] text-[12px] tracking-[-0.42px] leading-[17px] text-[#4b4b4b]">PBPI_BackEnd_DevTools</div>
    <div class="mt-[20px] text-[10px] leading-[14px] text-[#9a9a9a]">Export for</div>
    <div class="mt-[7px] flex items-center gap-[22px] text-[12px] leading-[17px] text-[#4b4b4b]">
      Web
      <svg width="9" height="6" viewBox="0 0 9 6" fill="none" stroke="#666" stroke-width="1.200"><path d="M1 1l3.500 3.500L8 1" /></svg>
    </div>
    <div class="mt-[21px] flex items-center h-[16px]">
      <div class="w-4 h-4 rounded-[2px] bg-[#6b6b6b] flex items-center justify-center"><svg width="11" height="9" viewBox="0 0 11 9" fill="none" stroke="#fff" stroke-width="2"><path d="M1 4.500l3 3L10 1" /></svg></div>
      <span class="ml-[8px] text-[10px] tracking-[-0.22px] text-[#5c5c5c]">Include Assets for Download</span>
      <svg class="ml-[14px]" width="14" height="14" viewBox="0 0 14 14" fill="none" stroke="#666"><circle cx="7" cy="7" r="6.400" /><path d="M7 6v4.500M5.800 10.500h2.400M5.800 6H7" stroke-width="1.200" /><circle cx="7" cy="3.800" r=".9" fill="#666" stroke="none" /></svg>
    </div>
    <div class="mt-[9px] ml-[26px] text-[10px] tracking-[-0.1px] leading-[16px] text-[#a0a0a0] relative">
      109 Assets
      <svg class="absolute left-[-9px] top-[-8px]" width="64" height="32" viewBox="1582 390 64 32" fill="none" stroke="#e01414" stroke-width="1.400" stroke-linecap="round" stroke-linejoin="round"><path d="M1591 417L1590 408L1584 395C1596 392 1604 391 1614 390.500C1624 390 1636 390 1640 392C1643 394 1643.500 403 1643 408C1642.500 411 1641 414 1640 414L1590 413" /></svg>
    </div>
    <div class="mt-[11px] flex items-center h-[16px]">
      <div class="w-4 h-4 rounded-[2px] border-[1.500px] border-[#6b6b6b] bg-white"></div>
      <span class="ml-[8px] text-[10px] tracking-[-0.25px] text-[#5c5c5c]">Require Password</span>
    </div>
    <div class="mt-[136px] flex items-center ml-[72px]">
      <div class="w-[75px] h-8 rounded-full bg-[#2680eb] text-white text-[12px] font-bold flex items-center justify-center">Update</div>
      <div class="ml-[33px] text-[12px] tracking-[-0.3px] font-bold text-[#4b4b4b]">New Link</div>
    </div>
    <div class="mt-[32px] -mx-[23px] border-t border-[#e6e6e6] pt-[15px] pl-[23px] pr-[20px]">
      <div class="text-[10.500px] leading-[16px] whitespace-nowrap text-[#1a8ccf]">https://xd.adobe.com/spec/35aad97e-6960-45bc-6c95-3dff290b...</div>
      <div class="mt-[12px] text-center pr-[3px] text-[12px] tracking-[-0.2px] leading-[16px] font-bold text-[#4b4b4b]">Copy Link</div>
    </div>
  </div>

  <!-- plugin update banner -->
  <div class="absolute left-[56px] top-[1002px] w-[1804px] h-[48px] rounded-t-[4px] bg-[#1473e6] flex items-center justify-center text-white text-[13.3px] pb-[1px]">
    <span class="-ml-[48px]">5 of your plugins have updates available. <span class="underline">Open Plugin Manager</span></span>
    <svg class="absolute right-[26px] top-[18px]" width="13" height="13" viewBox="0 0 13 13" fill="none" stroke="#fff" stroke-width="1.500"><path d="M.7 .7l11.600 11.600M12.300 .7L.7 12.300" /></svg>
  </div>
</div>
</body>
</html>
